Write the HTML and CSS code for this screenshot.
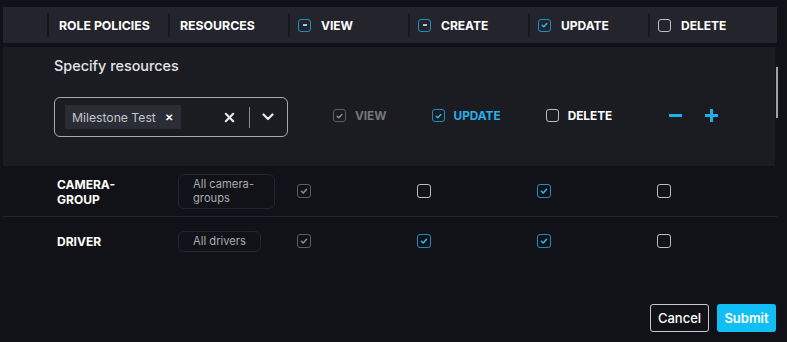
FILE: index.html
```html
<!DOCTYPE html>
<html lang="en">
<head>
    <meta charset="UTF-8">
    <meta name="viewport" content="width=device-width, initial-scale=1.0">
    <title>Role policies</title>
    <link rel="stylesheet" href="styles.css">
</head>
<body>

    <div class="page">
        <div class="grid thead">
            <div class="th"></div>
            <div class="th">ROLE POLICIES</div>
            <div class="th">RESOURCES</div>
            <div class="th"><span class="cb cb-mixed"></span>VIEW</div>
            <div class="th"><span class="cb cb-mixed"></span>CREATE</div>
            <div class="th"><span class="cb cb-on"><svg viewBox="0 0 14 14"><path d="M4 7.3 L6.1 9.3 L10 5"/></svg></span>UPDATE</div>
            <div class="th"><span class="cb"></span>DELETE</div>
        </div>

        <div class="panel">
            <div class="panel-title">Specify resources</div>
            <div class="panel-row">
                <div class="select">
                    <span class="chip">Milestone Test <span class="chip-x">&#x2715;</span></span>
                    <span class="select-clear">
                        <svg viewBox="0 0 12 12"><path d="M2 2 L10 10 M10 2 L2 10"/></svg>
                    </span>
                    <span class="select-sep"></span>
                    <span class="select-arrow">
                        <svg viewBox="0 0 12 8"><path d="M1.5 1.5 L6 6 L10.5 1.5"/></svg>
                    </span>
                </div>
                <label class="opt opt-disabled"><span class="cb cb-dis"><svg viewBox="0 0 14 14"><path d="M4 7.3 L6.1 9.3 L10 5"/></svg></span>VIEW</label>
                <label class="opt opt-active"><span class="cb cb-on"><svg viewBox="0 0 14 14"><path d="M4 7.3 L6.1 9.3 L10 5"/></svg></span>UPDATE</label>
                <label class="opt"><span class="cb"></span>DELETE</label>
                <span class="icon-btn icon-minus"></span>
                <span class="icon-btn icon-plus"></span>
            </div>
            <div class="scrollbar"></div>
        </div>

        <div class="grid trow">
            <div class="td"></div>
            <div class="td name">CAMERA-<br>GROUP</div>
            <div class="td"><span class="res res-wide">All camera-<br>groups</span></div>
            <div class="td"><span class="cb cb-dis"><svg viewBox="0 0 14 14"><path d="M4 7.3 L6.1 9.3 L10 5"/></svg></span></div>
            <div class="td"><span class="cb"></span></div>
            <div class="td"><span class="cb cb-on"><svg viewBox="0 0 14 14"><path d="M4 7.3 L6.1 9.3 L10 5"/></svg></span></div>
            <div class="td"><span class="cb"></span></div>
        </div>

        <div class="grid trow trow-last">
            <div class="td"></div>
            <div class="td name">DRIVER</div>
            <div class="td"><span class="res">All drivers</span></div>
            <div class="td"><span class="cb cb-dis"><svg viewBox="0 0 14 14"><path d="M4 7.3 L6.1 9.3 L10 5"/></svg></span></div>
            <div class="td"><span class="cb cb-on"><svg viewBox="0 0 14 14"><path d="M4 7.3 L6.1 9.3 L10 5"/></svg></span></div>
            <div class="td"><span class="cb cb-on"><svg viewBox="0 0 14 14"><path d="M4 7.3 L6.1 9.3 L10 5"/></svg></span></div>
            <div class="td"><span class="cb"></span></div>
        </div>

        <div class="actions">
            <button class="btn btn-cancel">Cancel</button>
            <button class="btn btn-submit">Submit</button>
        </div>
    </div>

</body>
</html>
```
FILE: styles.css
```css
body {
    margin: 0;
    background-color: #111217;
    font-family: Inter, "Noto Sans", sans-serif;
    color: #ffffff;
}

.page {
    width: 774px;
    padding: 7px 0 0 3px;
}

.grid {
    display: grid;
    grid-template-columns: 44px 121px 120px 120px 120px 120px 129px;
}

.thead {
    background-color: #24252c;
    padding: 6px 0;
}

.th {
    display: flex;
    align-items: center;
    height: 24px;
    padding-left: 8px;
    border-left: 2px solid #17181d;
    font-size: 12px;
    font-weight: 700;
}

.th:nth-child(2),
.th:nth-child(3) {
    padding-left: 10px;
    font-size: 12.3px;
}

.th:first-child {
    border-left: none;
}

.th .cb {
    width: 13px;
    height: 13px;
    margin-right: 10px;
}

/* checkboxes */
.cb {
    display: inline-flex;
    align-items: center;
    justify-content: center;
    box-sizing: border-box;
    width: 14px;
    height: 14px;
    border: 1.5px solid #bdbdc0;
    border-radius: 3px;
    flex-shrink: 0;
}

.cb svg {
    width: 14px;
    height: 14px;
}

.cb svg path {
    fill: none;
    stroke-width: 1.8;
    stroke-linecap: round;
    stroke-linejoin: round;
}

.cb-on {
    border-color: #1b8fc4;
}

.cb-on svg path {
    stroke: #2cb8f0;
}

.cb-dis {
    border-color: #5c5e65;
}

.cb-dis svg path {
    stroke: #8c8e93;
}

.cb-mixed {
    border-color: #1b8fc4;
}

.cb-mixed::after {
    content: "";
    width: 4px;
    height: 1.5px;
    background-color: #a8c8d8;
}

/* expanded panel */
.panel {
    position: relative;
    margin-top: 4px;
    height: 119px;
    width: 772px;
    box-sizing: border-box;
    background-color: #1b1c22;
    padding: 9px 0 0 51px;
}

.panel-title {
    font-size: 14.4px;
    font-weight: 500;
    color: #e4e4e6;
    line-height: 20px;
}

.panel-row {
    display: flex;
    align-items: center;
    margin-top: 21px;
}

.select {
    display: flex;
    align-items: center;
    box-sizing: border-box;
    width: 234px;
    height: 40px;
    border: 1px solid #a9a9ad;
    border-radius: 6px;
    padding-left: 10px;
}

.chip {
    display: inline-flex;
    align-items: center;
    height: 24px;
    width: 116px;
    box-sizing: border-box;
    padding-left: 7px;
    background-color: #2a2d35;
    font-size: 12.2px;
    color: #c4c5c8;
}

.chip-x {
    margin-left: 9px;
    font-size: 10px;
    font-weight: 700;
    color: #ffffff;
}

.select-clear {
    display: inline-flex;
    margin-left: 43px;
}

.select-clear svg {
    width: 11px;
    height: 11px;
}

.select-clear path {
    stroke: #e8e8ea;
    stroke-width: 2.4;
    stroke-linecap: round;
}

.select-sep {
    width: 1px;
    height: 21px;
    background-color: #8a8b90;
    margin-left: 14px;
}

.select-arrow {
    display: inline-flex;
    margin-left: 12px;
}

.select-arrow svg {
    width: 12px;
    height: 8px;
}

.select-arrow path {
    fill: none;
    stroke: #e8e8ea;
    stroke-width: 2.2;
    stroke-linecap: round;
    stroke-linejoin: round;
}

.opt {
    display: inline-flex;
    align-items: center;
    gap: 9px;
    margin-left: 45px;
    margin-bottom: 3px;
    font-size: 11.8px;
    font-weight: 700;
    color: #ffffff;
}

.opt .cb {
    width: 13px;
    height: 13px;
}

.opt-disabled {
    color: #73767c;
}

.opt-active {
    color: #29aee6;
}

.icon-btn {
    position: relative;
    width: 13px;
    height: 13px;
    margin-bottom: 3px;
}

.icon-minus {
    margin-left: 57px;
}

.icon-plus {
    margin-left: 23px;
}

.icon-btn::before,
.icon-plus::after {
    content: "";
    position: absolute;
    left: 0;
    top: 5px;
    width: 13px;
    height: 3px;
    background-color: #1fb0ea;
}

.icon-plus::after {
    left: 5px;
    top: 0;
    width: 3px;
    height: 13px;
}

.scrollbar {
    position: absolute;
    right: -3px;
    top: 20px;
    width: 2px;
    height: 51px;
    background-color: #a0a1a5;
}

/* rows */
.trow {
    min-height: 50px;
    border-bottom: 1px solid #23252c;
    align-items: center;
}

.trow-last {
    border-bottom: none;
    min-height: 48px;
}

.td {
    display: flex;
    align-items: center;
    padding-left: 10px;
}

.name {
    font-size: 12px;
    font-weight: 650;
    line-height: 15px;
    padding-top: 1px;
}

.res {
    display: inline-block;
    box-sizing: border-box;
    padding: 2px 14px 3px 14px;
    border: 1px solid #24262d;
    border-radius: 6px;
    font-size: 11.2px;
    line-height: 14px;
    color: #a9aaae;
}

.res-wide {
    width: 97px;
}

.trow .cb {
    margin-left: -1px;
}

.actions {
    display: flex;
    justify-content: flex-end;
    gap: 8px;
    margin-top: 39px;
    padding-right: 1px;
}

.btn {
    height: 28px;
    width: 59px;
    border-radius: 3px;
    font-family: Inter, "Noto Sans", sans-serif;
    font-size: 13px;
    font-weight: 600;
    color: #ffffff;
    cursor: pointer;
    padding: 0;
}

.btn-cancel {
    background-color: #111217;
    border: 1px solid #c8c8cc;
    font-weight: 500;
}

.btn-submit {
    background-color: #12bff4;
    border: none;
}
```
